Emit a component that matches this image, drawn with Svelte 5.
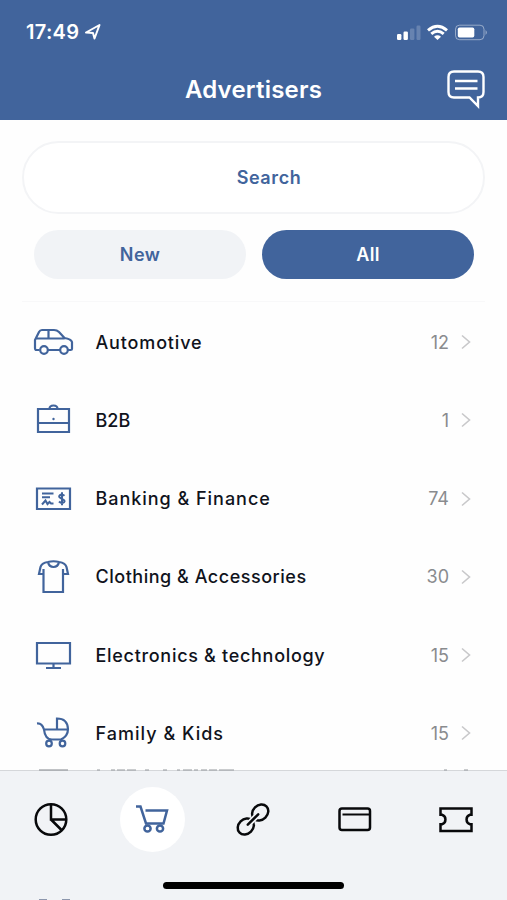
<script>
	let activeFilter = "All";
	let activeTab = "shop";

	const filters = ["New", "All"];
	const tabs = ["stats", "shop", "links", "card", "coupons"];

	const categories = [
		{ name: "Automotive", icon: "car", count: 12, spacing: 0.85 },
		{ name: "B2B", icon: "briefcase", count: 1, spacing: 0 },
		{ name: "Banking & Finance", icon: "check", count: 74, spacing: 0.97 },
		{ name: "Clothing & Accessories", icon: "shirt", count: 30, spacing: 0.52 },
		{ name: "Electronics & technology", icon: "monitor", count: 15, spacing: 0.7 },
		{ name: "Family & Kids", icon: "stroller", count: 15, spacing: 1.02 }
	];
</script>

<div class="screen">
	<header>
		<div class="status">
			<span class="time">17:49</span>
			<svg class="location" width="18" height="18" viewBox="0 0 18 18">
				<path d="M2 9.5 15.5 2 10.5 15.500 9 10z" />
			</svg>
			<svg class="signals" width="96" height="20" viewBox="0 0 96 20">
				<rect x="1" y="12" width="4.4" height="6" rx="1.2" />
				<rect x="7.5" y="9.500" width="4.4" height="8.500" rx="1.2" />
				<g opacity="0.2">
					<rect x="14" y="6.500" width="4.4" height="11.500" rx="1.2" />
					<rect x="20.5" y="3.500" width="4" height="14.500" rx="1.2" />
				</g>
				<g fill="none" stroke="#fff" stroke-width="3">
					<path d="M32 8.300q9.5-8 19 0" />
					<path d="M35.3 11.900q6.200-5.200 12.400 0" />
				</g>
				<path d="M38 14.700q3.500-2.800 7 0L41.500 18z" />
				<rect class="shell" x="59.5" y="3.200" width="28.5" height="14.500" rx="4" />
				<rect x="61.8" y="5.500" width="16.500" height="10" rx="1.800" />
				<path opacity="0.4" d="M89.5 8q3 2.5 0 5z" />
			</svg>
		</div>
		<div class="title_bar">
			<h1>Advertisers</h1>
			<button class="chat" aria-label="Messages">
				<svg width="42" height="42" viewBox="0 0 42 42">
					<path d="M9 3.500h24q5.500 0 5.500 5.500v15q0 5.500-5.500 5.500v8.500l-8.500-8.500H9q-5.500 0-5.500-5.500V9q0-5.500 5.500-5.500zM10 13h22.500M10 20.500h22.500" />
				</svg>
			</button>
		</div>
	</header>

	<main>
		<button class="search">Search</button>
		<div class="filters">
			{#each filters as filter}
				<button class:active={activeFilter === filter} on:click={() => (activeFilter = filter)}>{filter}</button>
			{/each}
		</div>

		<ul>
			{#each categories as category}
				<li>
					<svg class="icon" width="42" height="38" viewBox="0 0 42 38">
						{#if category.icon === "car"}
							<path d="M6.500 27H3.500Q2 27 2 25V17L6 9Q7 7 9 7H21Q24 7 26 9L31.500 15Q38 16 39 19V26Q39 27 37.500 27H35M27 27H15M3 15.500H31.500M15.500 7V15.500" />
							<circle cx="11" cy="27" r="3.800" />
							<circle cx="31" cy="27" r="3.800" />
						{:else if category.icon === "briefcase"}
							<path d="M5 8H36V31H5zM5 22H36M16.500 8Q16.500 4.500 20.500 4.500T24.500 8" />
							<circle class="dot" cx="20.500" cy="18" r="1.200" />
						{:else if category.icon === "check"}
							<path d="M4 8.500H37V29H4z" />
							<path stroke-width="2" d="M9 13.500H20.500M9 17.300H17M9 24.500l3.500-4 2 3.500 2-2 1.500 1.500h2.500" />
							<path stroke-width="2" d="M31.500 15.800Q28.800 13.500 26.800 15.300T28.800 18.800T31 22.200Q28.500 24 26 21.500M29 12.200V25.300" />
						{:else if category.icon === "shirt"}
							<path d="M15 4Q8.500 5 7.500 9L6 16H10.500V34H30V16H35L33.500 9Q32.500 5 26 4Q20.500 2.500 15 4zM15 4Q16 9 20.500 9T26 4M10.500 17V11M30 17V11" />
						{:else if category.icon === "monitor"}
							<path d="M4 7H37V27.500H4zM20.500 27.500V32M13 32H28" />
						{:else}
							<path d="M4 9.500Q9 9 11 15.500Q12 25.500 19 25.500H28Q35 22 35 15Q34.500 4.500 24 4.500V15.500M11 15.500H35M18 25.500l-1 1.500M28 25.500l1 1.500" />
							<circle cx="16" cy="29.500" r="2.800" />
							<circle cx="29.500" cy="29.500" r="2.800" />
						{/if}
					</svg>
					<span class="name" style="letter-spacing: {category.spacing}px">{category.name}</span>
					<span class="count">{category.count}</span>
					<svg class="arrow" width="10" height="16" viewBox="0 0 10 16">
						<path d="M1 1.500l7.500 6.500L1 14.500" />
					</svg>
				</li>
			{/each}
		</ul>
	</main>

	<nav>
		<!-- next row showing through the edge of the bar -->
		<svg class="peek" width="507" height="5" viewBox="0 0 507 5">
			<path d="M39 1H68" />
			<path stroke-dasharray="3 11 4 2 8 2 9 9 4 14 4 10 3 3 9 2 4 3 6 2 8 2 15" d="M97 1H235" />
			<path d="M444 1h3M464 1h4" />
		</svg>
		<div class="tabs">
			{#each tabs as tab}
				<button class:active={activeTab === tab} aria-label={tab} on:click={() => (activeTab = tab)}>
					<svg width="36" height="36" viewBox="0 0 36 36">
						{#if tab === "stats"}
							<circle cx="18" cy="17.500" r="15.300" />
							<path d="M18 2.500V17.500H33M18 17.500L28.500 28" />
						{:else if tab === "shop"}
							<path d="M2 4.500H6.500L12 21.500H29.500L33 8.500H11.500" />
							<circle cx="13.500" cy="26.500" r="3.100" />
							<circle cx="26" cy="26.500" r="3.100" />
						{:else if tab === "links"}
							<ellipse cx="10.800" cy="24.500" rx="8.800" ry="7.300" transform="rotate(-45 10.800 24.500)" />
							<ellipse cx="25.200" cy="10.500" rx="8.800" ry="7.300" transform="rotate(-45 25.200 10.500)" />
							<path class="gap" d="M13.500 22L22.500 13" />
							<path stroke-linecap="round" d="M12.800 22.700L23.200 12.300" />
						{:else if tab === "card"}
							<rect x="2.500" y="6.500" width="30.500" height="21.500" rx="2.500" />
							<path stroke-width="2" d="M5.500 12.500H33" />
						{:else}
							<path d="M2.500 6.500H33.500V12.800H32a5 5 0 0 0 0 9.500H33.500V29H2.500V22.300H4a5 5 0 0 0 0-9.500H2.500z" />
						{/if}
					</svg>
				</button>
			{/each}
		</div>
		<div class="home_bar"></div>
		<svg class="next_icon" width="34" height="2" viewBox="0 0 34 2">
			<path d="M1 1.500H9M24 1.500H32" />
		</svg>
	</nav>
</div>

<style>
	:global(body) {
		background: #fefefe;
	}

	.screen {
		height: 900px;
		display: flex;
		flex-direction: column;
		overflow: hidden;
		font-family: Inter, "Liberation Sans", sans-serif;
		color: #10131c;
	}

	button {
		border: none;
		padding: 0;
		font: inherit;
	}

	header {
		box-sizing: border-box;
		height: 120px;
		flex: none;
		background: #41649c;
		color: white;
	}

	.status {
		display: flex;
		align-items: center;
		height: 64px;
		padding: 0 15px 0 26px;
	}

	.time {
		font-size: 20px;
		font-weight: 600;
		letter-spacing: 0.3px;
	}

	.location {
		margin-left: 5px;
		fill: none;
		stroke: white;
		stroke-width: 2;
		stroke-linejoin: round;
	}

	.signals {
		margin-left: auto;
		fill: white;
	}

	.shell {
		fill: none;
		stroke: white;
		stroke-opacity: 0.45;
	}

	.title_bar {
		display: grid;
		grid-template-columns: 62px 1fr 62px;
		align-items: center;
		height: 50px;
	}

	h1 {
		grid-column: 2;
		margin: 0;
		text-align: center;
		font-size: 24px;
		font-weight: 600;
		letter-spacing: 0.2px;
	}

	.chat {
		width: 42px;
		height: 42px;
		background: none;
	}

	.chat svg {
		display: block;
		fill: none;
		stroke: white;
		stroke-width: 2.4;
	}

	main {
		flex: 1;
		min-height: 0;
		overflow: hidden;
		padding: 21px 22px 0;
	}

	.search {
		display: block;
		box-sizing: border-box;
		width: 100%;
		height: 73px;
		padding-left: 31px;
		border: 2.5px solid #f3f4f6;
		border-radius: 37px;
		background: white;
		color: #41649c;
		font-size: 18px;
		font-weight: 600;
		letter-spacing: 0.6px;
	}

	.filters {
		display: flex;
		gap: 16px;
		padding: 16px 11px 22px 12px;
		border-bottom: 1px solid #f8f8f9;
	}

	.filters button {
		flex: 1;
		height: 49px;
		border-radius: 25px;
		background: #f1f3f6;
		color: #41649c;
		font-size: 18px;
		font-weight: 600;
		letter-spacing: 0.4px;
	}

	.filters button.active {
		background: #41649c;
		color: white;
	}

	ul {
		list-style: none;
		margin: 0;
		padding: 1px 14px 0 11px;
	}

	li {
		display: flex;
		align-items: center;
		height: 78.25px;
	}

	.icon {
		margin-right: 20.5px;
		fill: none;
		stroke: #41649c;
		stroke-width: 2.2;
	}

	.dot {
		fill: #41649c;
		stroke: none;
	}

	.name {
		flex: 1;
		white-space: nowrap;
		font-size: 18px;
		font-weight: 500;
	}

	.count {
		color: #898b8e;
		font-size: 18px;
	}

	.arrow {
		margin-left: 12px;
		fill: none;
		stroke: #c8c8ca;
		stroke-width: 1.6;
	}

	nav {
		position: relative;
		box-sizing: border-box;
		height: 130px;
		flex: none;
		border-top: 1px solid #d5d7da;
		background: #f1f3f6;
	}

	.peek {
		position: absolute;
		top: -2px;
		left: 0;
		stroke: #96999e;
		stroke-width: 1.2;
	}

	.tabs {
		display: flex;
		height: 97px;
		align-items: center;
		justify-content: space-around;
	}

	.tabs button {
		display: grid;
		place-items: center;
		width: 65px;
		height: 65px;
		border-radius: 50%;
		background: none;
	}

	.tabs svg {
		fill: none;
		stroke: #08090b;
		stroke-width: 2.5;
	}

	.tabs button.active {
		background: white;
	}

	.tabs .active svg {
		stroke: #41649c;
	}

	.tabs .gap {
		stroke: #f1f3f6;
		stroke-width: 6;
	}

	.home_bar {
		width: 181px;
		height: 7px;
		margin: 14px auto 0;
		border-radius: 4px;
		background: black;
	}

	.next_icon {
		position: absolute;
		bottom: 0;
		left: 38px;
		stroke: #8d97ad;
	}
</style>
